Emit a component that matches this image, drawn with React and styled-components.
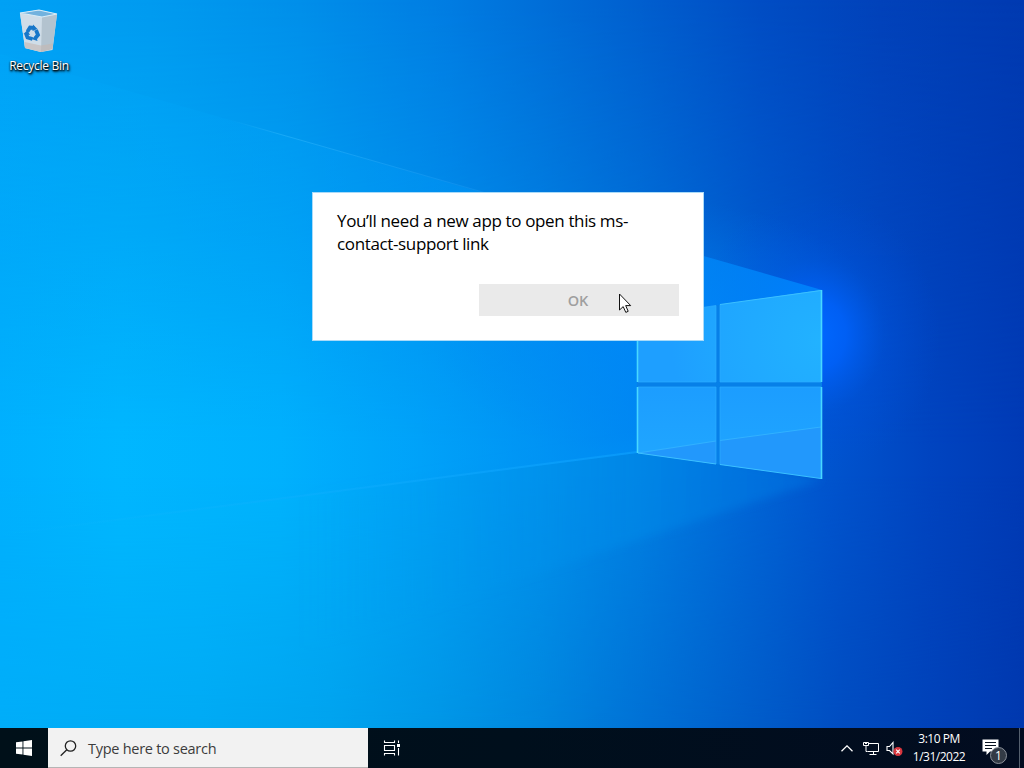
import React from 'react';

import styled, { createGlobalStyle } from 'styled-components';

const GlobalStyle = createGlobalStyle`
  * {
    box-sizing: border-box;
  }

  body {
    margin: 0;
    overflow: hidden;
    font-family: 'Open Sans', 'Noto Sans', sans-serif;
  }
`;

const Screen = styled.div`
  position: relative;
  display: flex;
  flex-direction: column;
  width: 1024px;
  height: 768px;
  overflow: hidden;
  background: #0078e0;
`;

const WallpaperSvg = styled.svg`
  position: absolute;
  top: 0;
  left: 0;
`;

const DesktopArea = styled.main`
  position: relative;
  flex: 1;
`;

const Shortcut = styled.div`
  display: flex;
  flex-direction: column;
  align-items: center;
  width: 78px;
  padding-top: 8px;
`;

const ShortcutLabel = styled.span`
  margin-top: 2px;
  color: white;
  font-size: 12px;
  line-height: 16px;
  letter-spacing: -0.28px;
  white-space: nowrap;
  text-shadow: 0 1px 2px black, 1px 1px 2px black, 1px 2px 3px rgba(0, 0, 0, 0.6);
`;

const Dialog = styled.section`
  position: absolute;
  top: 192px;
  left: 312px;
  display: flex;
  flex-direction: column;
  align-items: flex-end;
  justify-content: space-between;
  width: 392px;
  height: 149px;
  padding: 16px 24px 24px;
  background: white;
  border: 1px solid #a9daf8;
`;

const Message = styled.p`
  width: 100%;
  margin: 0;
  color: #000;
  font-size: 17px;
  line-height: 23px;
  letter-spacing: -0.36px;
`;

const OkButton = styled.button`
  width: 200px;
  height: 32px;
  padding: 0 2px 0 0;
  background: #eaeaea;
  border: none;
  color: #9f9f9f;
  font-family: inherit;
  font-size: 14.5px;
  font-weight: 600;
`;

const CursorSvg = styled.svg`
  position: absolute;
  top: 293px;
  left: 618px;
`;

const Taskbar = styled.footer`
  position: relative;
  display: flex;
  align-items: stretch;
  height: 40px;
  background: linear-gradient(90deg, #001019, #000f1c 50%, #020c20);
`;

const StartButton = styled.div`
  display: flex;
  align-items: center;
  justify-content: center;
  width: 48px;
`;

const SearchBox = styled.div`
  display: flex;
  align-items: center;
  gap: 11px;
  width: 320px;
  padding: 1px 0 0 12px;
  background: #f2f2f2;
  border: solid #b5b5b5;
  border-width: 0 0 1px;
  color: #3c3c3c;
  font-size: 14.5px;
  letter-spacing: -0.27px;
`;

const TaskView = styled.div`
  display: flex;
  align-items: center;
  justify-content: center;
  width: 48px;
`;

const Tray = styled.div`
  display: flex;
  align-items: center;
  margin-left: auto;
`;

const TrayIcon = styled.div`
  display: flex;
  justify-content: center;
  width: ${(props) => props.$width}px;
`;

const Clock = styled.div`
  width: 68px;
  color: white;
  font-size: 12px;
  line-height: 18px;
  letter-spacing: -0.5px;
  text-align: center;
  white-space: nowrap;
`;

const Notifications = styled.div`
  position: relative;
  width: 46px;
  height: 40px;
  padding: 11px 0 0 9px;
`;

const Badge = styled.span`
  position: absolute;
  top: 19px;
  left: 17px;
  width: 17px;
  height: 17px;
  background: #333b46;
  border: 1px solid #8c929b;
  border-radius: 50%;
  color: white;
  font-size: 12px;
  line-height: 15px;
  text-align: center;
`;

const ShowDesktop = styled.div`
  width: 5px;
  height: 40px;
  border-left: 1px solid #55606e;
`;

// [x, colour] stops of the sky at the top, the middle and the bottom
const topStops = [
  [0, '#00a1f5'],
  [150, '#009bf0'],
  [300, '#008fea'],
  [450, '#007ce2'],
  [560, '#006bd6'],
  [640, '#005fcf'],
  [760, '#004dc4'],
  [880, '#0242ba'],
  [1024, '#003ab1'],
];

const middleStops = [
  [0, '#00b0fe'],
  [120, '#00b8ff'],
  [280, '#00b3fd'],
  [420, '#00a2f7'],
  [540, '#0092ed'],
  [640, '#0080e3'],
  [740, '#0068d8'],
  [830, '#0054ce'],
  [930, '#0044c0'],
  [1024, '#003ab5'],
];

const bottomStops = [
  [0, '#00adf9'],
  [200, '#00aaf4'],
  [330, '#00a3ee'],
  [440, '#0096e6'],
  [540, '#0086de'],
  [640, '#0071d5'],
  [740, '#005fcb'],
  [840, '#004dc1'],
  [930, '#0042b9'],
  [1024, '#0038ae'],
];

const SkyGradient = ({ id, stops }) => (
  <linearGradient id={id} x1="0" y1="0" x2="1" y2="0">
    {stops.map(([x, color]) => (
      <stop key={x} offset={x / 1024} stopColor={color} />
    ))}
  </linearGradient>
);

const Wallpaper = () => (
  <WallpaperSvg width="1024" height="768" viewBox="0 0 1024 768">
    <defs>
      <SkyGradient id="skyTop" stops={topStops} />
      <SkyGradient id="skyMiddle" stops={middleStops} />
      <SkyGradient id="skyBottom" stops={bottomStops} />
      <linearGradient id="fadeMiddle" x1="0" y1="0" x2="0" y2="1">
        <stop offset="0" stopColor="black" />
        <stop offset="0.3" stopColor="#707070" />
        <stop offset="0.58" stopColor="white" />
      </linearGradient>
      <linearGradient id="fadeBottom" x1="0" y1="0" x2="0" y2="1">
        <stop offset="0.62" stopColor="black" />
        <stop offset="0.95" stopColor="white" />
      </linearGradient>
      <mask id="middleMask">
        <rect width="1024" height="768" fill="url(#fadeMiddle)" />
      </mask>
      <mask id="bottomMask">
        <rect width="1024" height="768" fill="url(#fadeBottom)" />
      </mask>
      <radialGradient id="centreGlow" gradientUnits="userSpaceOnUse" cx="0" cy="0" r="1" gradientTransform="translate(660 330) scale(230 130)">
        <stop offset="0" stopColor="#0085fa" stopOpacity="0.7" />
        <stop offset="0.5" stopColor="#0080f4" stopOpacity="0.35" />
        <stop offset="1" stopColor="#007cf0" stopOpacity="0" />
      </radialGradient>
      <radialGradient id="halo" gradientUnits="userSpaceOnUse" cx="0" cy="0" r="1" gradientTransform="translate(815 335) scale(125 140)">
        <stop offset="0" stopColor="#0068ff" />
        <stop offset="0.25" stopColor="#0061fb" stopOpacity="0.85" />
        <stop offset="0.55" stopColor="#0055e4" stopOpacity="0.35" />
        <stop offset="1" stopColor="#0050dc" stopOpacity="0" />
      </radialGradient>
      <linearGradient id="beam" gradientUnits="userSpaceOnUse" x1="0" y1="0" x2="822" y2="0">
        <stop offset="0" stopColor="#00b4ff" stopOpacity="0.1" />
        <stop offset="0.5" stopColor="#00a2ff" stopOpacity="0.25" />
        <stop offset="0.78" stopColor="#008cfa" stopOpacity="0.65" />
        <stop offset="1" stopColor="#0088ff" stopOpacity="0.8" />
      </linearGradient>
      <linearGradient id="lowerBeam" gradientUnits="userSpaceOnUse" x1="300" y1="0" x2="822" y2="0">
        <stop offset="0" stopColor="#00a0f0" stopOpacity="0" />
        <stop offset="0.65" stopColor="#008cea" stopOpacity="0.5" />
        <stop offset="1" stopColor="#0070e0" stopOpacity="0.6" />
      </linearGradient>
      <linearGradient id="streak" gradientUnits="userSpaceOnUse" x1="230" y1="0" x2="500" y2="0">
        <stop offset="0" stopColor="#35bdff" stopOpacity="0" />
        <stop offset="0.2" stopColor="#35bdff" stopOpacity="0.45" />
        <stop offset="1" stopColor="#35aaff" stopOpacity="0.2" />
      </linearGradient>
      <linearGradient id="lowerStreak" gradientUnits="userSpaceOnUse" x1="0" y1="0" x2="637" y2="0">
        <stop offset="0" stopColor="#20c0ff" stopOpacity="0" />
        <stop offset="1" stopColor="#10a4ff" stopOpacity="0.55" />
      </linearGradient>
      <radialGradient id="pane" gradientUnits="userSpaceOnUse" cx="821" cy="340" r="150">
        <stop offset="0" stopColor="#22b2ff" />
        <stop offset="0.7" stopColor="#1fa6ff" />
        <stop offset="1" stopColor="#1e9fff" />
      </radialGradient>
      <linearGradient id="paneLow" x1="0" y1="0" x2="0" y2="1">
        <stop offset="0" stopColor="#1c9dff" />
        <stop offset="1" stopColor="#20a7ff" />
      </linearGradient>
      <filter id="soft" x="-20%" y="-20%" width="140%" height="140%">
        <feGaussianBlur stdDeviation="4" />
      </filter>
    </defs>

    <rect width="1024" height="768" fill="url(#skyTop)" />
    <rect width="1024" height="768" fill="url(#skyMiddle)" mask="url(#middleMask)" />
    <rect width="1024" height="768" fill="url(#skyBottom)" mask="url(#bottomMask)" />
    <rect width="1024" height="768" fill="url(#centreGlow)" />
    <rect width="1024" height="768" fill="url(#halo)" />
    <path d="M822 480L300 650V495L637 440Z" fill="url(#lowerBeam)" filter="url(#soft)" />
    <path d="M0 54L822 290V478L637 453L0 536Z" fill="url(#beam)" />
    <path d="M230 120L500 197" stroke="url(#streak)" strokeWidth="1" />
    <path d="M0 535L637 452" stroke="url(#lowerStreak)" strokeWidth="2" />

    {/* glass panes */}
    <path d="M637 317L822 290V479L637 453Z" fill="#0780e8" />
    <path d="M638 317L716 305.500V382H638Z" fill="url(#pane)" />
    <path d="M720 304.500L821 290V382H720Z" fill="url(#pane)" />
    <path d="M638 387H716V464L638 453Z" fill="url(#paneLow)" />
    <path d="M720 387H821V478L720 464.500Z" fill="url(#paneLow)" />
    <path d="M638 453L716 441V464ZM720 440.500L821 427V478L720 464.500Z" fill="#2298fc" />
    <path d="M638 453L716 441M720 440.500L821 427" stroke="#36b6ff" strokeWidth="0.800" />
    <path d="M638 317L716 305.500V382H638M720 304.500V382H821M720 387H821M638 387H716V464M720 387V464.500" fill="none" stroke="#2cacff" strokeWidth="0.700" />
    <path d="M720 304.500L821 290.500M638 453L716 464M720 464.500L821 478.500" stroke="#3cc0ff" strokeWidth="1" />
    <path d="M637.500 317V382M637.500 387V453M821.500 290V382M821.500 387V479" stroke="#48d8ff" strokeWidth="1.600" />
  </WallpaperSvg>
);

const RecycleBinIcon = () => (
  <svg width="48" height="48" viewBox="0 0 48 48">
    <path d="M5 5L24 2L42 6L37.500 42L26 44L10 40Z" fill="#d8dfe5" />
    <path d="M5 5L27 9L26 44L10 40Z" fill="#cfdde8" />
    <path d="M27 9L42 6L37.500 41L26 44Z" fill="#b3c3cf" />
    <path d="M5 5L24 2L42 6L27 9Z" fill="#72b2de" stroke="#d8ecf7" strokeWidth="1.100" />
    <path d="M9.500 34L26 37.500L38 35.500L37.500 41L26 44L10 40Z" fill="#c5b8b0" opacity="0.6" />
    <g fill="none" stroke="#1777c9" strokeWidth="3.800">
      <path d="M12.500 23.500L15 19.500L19.500 20" />
      <path d="M21 22L23 27L20.500 30" />
      <path d="M17.500 31L12.500 29.500L11 25.500" />
    </g>
    <path d="M18 16.500L22.500 21L17.500 23ZM22.500 33L16.500 31L21 27.500ZM8.500 26L12.500 22L15 27Z" fill="#1777c9" />
  </svg>
);

const StartIcon = () => (
  <svg width="16" height="16" viewBox="0 0 16 16" fill="white">
    <path d="M0 2.300L6.500 1.400V7.500H0ZM7.400 1.250L16 0V7.500H7.400ZM0 8.400H6.500V14.600L0 13.700ZM7.400 8.400H16V16L7.400 14.750Z" />
  </svg>
);

const SearchIcon = () => (
  <svg width="17" height="17" viewBox="0 0 17 17" fill="none" stroke="#222" strokeWidth="1.300">
    <circle cx="10.500" cy="6" r="5.200" />
    <path d="M6.800 9.700L0.700 15.800" />
  </svg>
);

const TaskViewIcon = () => (
  <svg width="18" height="16" viewBox="0 0 18 16" fill="none" stroke="white" strokeWidth="1.100">
    <path d="M1.500 0.500V2.500H11.500V0.500M1.500 5.500H11.500V10.500H1.500ZM1.500 15.500V13.500H11.500V15.500M15.500 0.500V3M15.500 8V15.500" />
    <rect x="14" y="4" width="3" height="3" fill="white" stroke="none" />
  </svg>
);

const NetworkIcon = () => (
  <svg width="17" height="15" viewBox="0 0 17 15" fill="none" stroke="white" strokeWidth="1">
    <path d="M6 2.500H15.500V10.500H4.500M10.500 10.500V13.500M6.500 13.500H13.500" />
    <path d="M0.500 1.500H5.500V4.500H0.500ZM3 4.500V10.500H4.500" />
    <path d="M2.500 1.500V3M3.500 1.500V3" />
  </svg>
);

const VolumeIcon = () => (
  <svg width="18" height="15" viewBox="0 0 18 15">
    <path d="M2 5.500H4.500L8 1.500V13L4.500 9.500H2Z" fill="none" stroke="white" strokeWidth="1.100" />
    <circle cx="13" cy="10.500" r="4.500" fill="#d9363e" />
    <path d="M11.200 8.700L14.800 12.300M14.800 8.700L11.200 12.300" stroke="white" strokeWidth="1.200" />
  </svg>
);

const Cursor = () => (
  <CursorSvg width="14" height="21" viewBox="0 0 14 21">
    <path d="M1.500 1V17L5.200 13.600L7.800 19.400L10.200 18.300L7.700 12.600H12.700Z" fill="white" stroke="#111" strokeWidth="1" />
  </CursorSvg>
);

const App = () => (
  <>
    <GlobalStyle />
    <Screen>
      <Wallpaper />
      <DesktopArea>
        <Shortcut>
          <RecycleBinIcon />
          <ShortcutLabel>Recycle Bin</ShortcutLabel>
        </Shortcut>
        <Dialog>
          <Message>You’ll need a new app to open this ms-contact-support link</Message>
          <OkButton>OK</OkButton>
        </Dialog>
        <Cursor />
      </DesktopArea>
      <Taskbar>
        <StartButton>
          <StartIcon />
        </StartButton>
        <SearchBox>
          <SearchIcon />
          Type here to search
        </SearchBox>
        <TaskView>
          <TaskViewIcon />
        </TaskView>
        <Tray>
          <TrayIcon $width={24}>
            <svg width="12" height="7" viewBox="0 0 12 7" fill="none" stroke="white" strokeWidth="1.300">
              <path d="M0.500 6.300L6 0.900L11.500 6.300" />
            </svg>
          </TrayIcon>
          <TrayIcon $width={24}>
            <NetworkIcon />
          </TrayIcon>
          <TrayIcon $width={22}>
            <VolumeIcon />
          </TrayIcon>
          <Clock>
            3:10 PM
            <br />
            1/31/2022
          </Clock>
          <Notifications>
            <svg width="17" height="17" viewBox="0 0 17 17">
              <path d="M0.500 0.500H16.500V12.500H8L4.500 16V12.500H0.500Z" fill="white" />
              <path d="M3 3.500H14M3 6.500H14M3 9.500H10" stroke="#07111f" strokeWidth="1" />
            </svg>
            <Badge>1</Badge>
          </Notifications>
          <ShowDesktop />
        </Tray>
      </Taskbar>
    </Screen>
  </>
);

export default App;
